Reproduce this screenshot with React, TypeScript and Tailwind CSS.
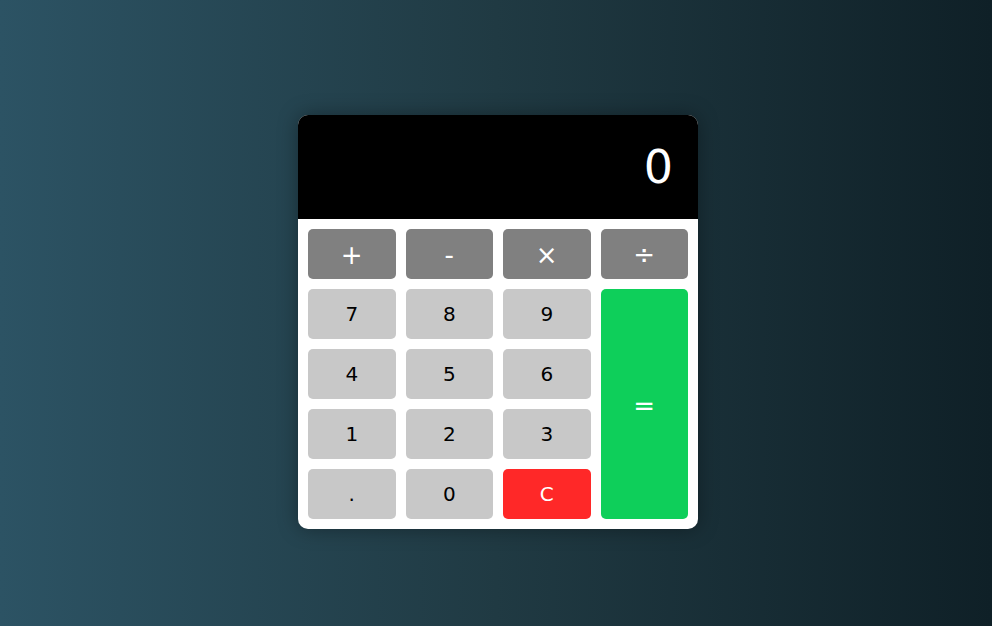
import React from "react";

export default function App() {
  const font = { fontFamily: '"DejaVu Sans", Verdana, sans-serif' };
  const op = "h-[50px] rounded-[5px] bg-[#808080] text-white text-[26px] pt-[3px] flex items-center justify-center";
  const num = "h-[50px] rounded-[5px] bg-[#c8c8c8] text-black text-[20px] flex items-center justify-center";
  return (
    <div
      className="w-[992px] h-[626px] flex items-center justify-center pl-1 pt-[18px] bg-[linear-gradient(to_right,#2c5364,#203a43,#0f2027)]"
      style={font}
    >
      <div className="w-[400px] rounded-[10px] overflow-hidden bg-white shadow-[0_0_20px_rgba(0,0,0,0.35)]">
        <div className="h-[104px] bg-black flex items-center justify-end pr-[25px] text-white text-[46px] leading-none">
          0
        </div>
        <div className="grid grid-cols-4 gap-[10px] p-[10px]">
          <button className={op}>+</button>
          <button className={op}>-</button>
          <button className={op}>×</button>
          <button className={op}>÷</button>
          <button className={num}>7</button>
          <button className={num}>8</button>
          <button className={num}>9</button>
          <button className="row-span-4 rounded-[5px] bg-[#0ecf5a] text-white text-[26px] pt-[4px] flex items-center justify-center">=</button>
          <button className={num}>4</button>
          <button className={num}>5</button>
          <button className={num}>6</button>
          <button className={num}>1</button>
          <button className={num}>2</button>
          <button className={num}>3</button>
          <button className={num}>.</button>
          <button className={num}>0</button>
          <button className="h-[50px] rounded-[5px] bg-[#ff2828] text-white text-[20px] flex items-center justify-center">C</button>
        </div>
      </div>
    </div>
  );
}
